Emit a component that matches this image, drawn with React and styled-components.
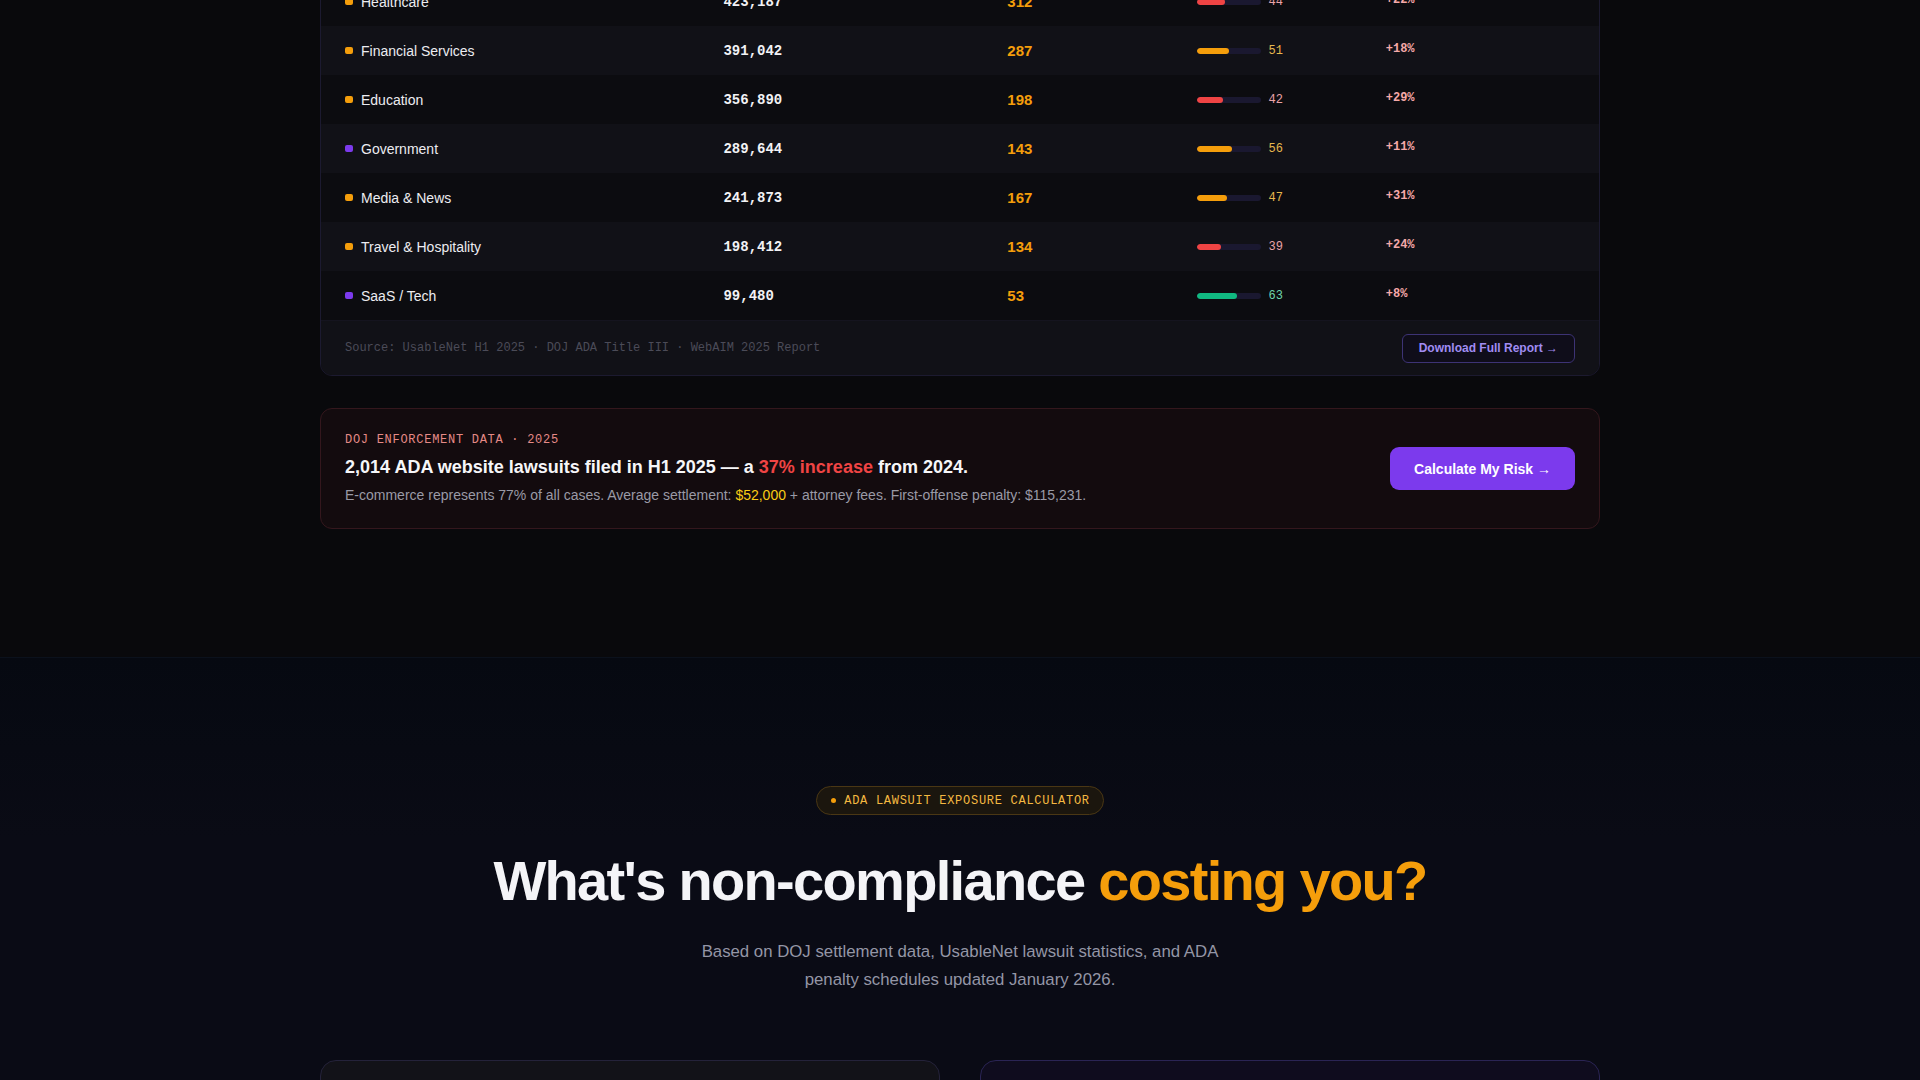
import React from 'react';
import styled, { createGlobalStyle } from 'styled-components';

const GlobalStyle = createGlobalStyle`
  html, body {
    margin: 0;
    padding: 0;
    background: #09090c;
  }
  body {
    font-family: "Liberation Sans", Arial, sans-serif;
    color: #e8e8ee;
    overflow: hidden;
  }
  * {
    box-sizing: border-box;
  }
`;

const SANS = '"Liberation Sans", Arial, sans-serif';
const MONO = '"Liberation Mono", "DejaVu Sans Mono", monospace';

const rows = [
  { name: 'Healthcare', dot: 'amber', sites: '423,187', suits: 312, score: 44, tone: 'red', change: '+22%' },
  { name: 'Financial Services', dot: 'amber', sites: '391,042', suits: 287, score: 51, tone: 'amber', change: '+18%' },
  { name: 'Education', dot: 'amber', sites: '356,890', suits: 198, score: 42, tone: 'red', change: '+29%' },
  { name: 'Government', dot: 'purple', sites: '289,644', suits: 143, score: 56, tone: 'amber', change: '+11%' },
  { name: 'Media & News', dot: 'amber', sites: '241,873', suits: 167, score: 47, tone: 'amber', change: '+31%' },
  { name: 'Travel & Hospitality', dot: 'amber', sites: '198,412', suits: 134, score: 39, tone: 'red', change: '+24%' },
  { name: 'SaaS / Tech', dot: 'purple', sites: '99,480', suits: 53, score: 63, tone: 'green', change: '+8%' },
];

const dotColors = { amber: '#f59e0b', purple: '#7c3aed' };
const barColors = { red: '#ef4444', amber: '#f59e0b', green: '#10b981' };
const scoreColors = { red: '#e9a3a8', amber: '#e6b84e', green: '#6fd6ad' };

// the page is shown scrolled: the Healthcare row sits half above the fold
const Page = styled.main`
  margin-top: -24px;
`;

const DataSection = styled.section`
  padding: 0 0 128px;
  background: #09090c;
`;

const Container = styled.div`
  width: 1280px;
  margin: 0 auto;
`;

const TableCard = styled.div`
  background: #0d0d12;
  border: 1px solid #1c1a30;
  border-radius: 12px;
  overflow: hidden;
`;

const Row = styled.div`
  display: grid;
  grid-template-columns: 2fr 1.5fr 1fr 1fr 1fr;
  align-items: center;
  height: 49px;
  padding: 0 24px;
  background: ${({ $alt }) => ($alt ? '#111117' : '#0c0c10')};
`;

const NameCell = styled.div`
  display: flex;
  align-items: center;
  gap: 8px;
  font-family: ${SANS};
  font-size: 14px;
  color: #ececf1;
`;

const Dot = styled.span`
  width: 8px;
  height: 7px;
  border-radius: 2px;
  background: ${({ $color }) => dotColors[$color]};
`;

const Sites = styled.div`
  font-family: ${MONO};
  font-size: 14px;
  font-weight: 700;
  color: #f2f2f5;
`;

const Suits = styled.div`
  font-family: ${SANS};
  font-size: 15px;
  font-weight: 700;
  color: #f59e0b;
`;

const ScoreCell = styled.div`
  display: flex;
  align-items: center;
  gap: 8px;
`;

const Track = styled.div`
  width: 64px;
  height: 6px;
  border-radius: 3px;
  background: #1a1830;
  overflow: hidden;
`;

const Fill = styled.div`
  height: 100%;
  border-radius: 3px;
  background: ${({ $tone }) => barColors[$tone]};
`;

const ScoreText = styled.span`
  font-family: ${MONO};
  font-size: 12px;
  color: ${({ $tone }) => scoreColors[$tone]};
`;

const Change = styled.div`
  font-family: ${MONO};
  font-size: 12px;
  font-weight: 700;
  color: #f5a9a9;
  padding-bottom: 4px;
`;

const TableFooter = styled.div`
  display: flex;
  align-items: center;
  justify-content: space-between;
  height: 55px;
  padding: 0 24px;
  background: #111117;
  border-top: 1px solid #15141f;
`;

const Source = styled.span`
  font-family: ${MONO};
  font-size: 12px;
  color: #4b4b58;
`;

const OutlineButton = styled.button`
  font-family: ${SANS};
  font-size: 12px;
  font-weight: 700;
  color: #a08cf2;
  background: #0f0d1a;
  border: 1px solid #3d3375;
  border-radius: 6px;
  padding: 0 16px;
  height: 29px;
  cursor: pointer;
`;

const AlertCard = styled.div`
  display: flex;
  align-items: center;
  justify-content: space-between;
  margin-top: 32px;
  padding: 23px 24px;
  background: #130b0e;
  border: 1px solid #34171d;
  border-radius: 12px;
`;

const AlertLabel = styled.div`
  font-family: ${MONO};
  font-size: 12px;
  line-height: 16px;
  letter-spacing: 0.06em;
  color: #e58a87;
`;

const AlertTitle = styled.h3`
  margin: 8px 0 0;
  font-family: ${SANS};
  font-size: 18px;
  line-height: 22px;
  font-weight: 700;
  color: #f6f6f8;
`;

const Red = styled.span`
  color: #ef4444;
`;

const AlertText = styled.p`
  margin: 7px 0 0;
  font-family: ${SANS};
  font-size: 14px;
  line-height: 20px;
  color: #9a9aa6;
`;

const Gold = styled.span`
  color: #facc15;
`;

const PrimaryButton = styled.button`
  font-family: ${SANS};
  font-size: 14px;
  font-weight: 700;
  color: #ffffff;
  background: #7c3aed;
  border: none;
  border-radius: 9px;
  height: 43px;
  padding: 0 24px;
  cursor: pointer;
`;

const CalcSection = styled.section`
  padding: 128px 0 0;
  border-top: 1px solid #0b111c;
  background: linear-gradient(180deg, #060911 0%, #0a0b15 22%, #0a0b15 100%);
  display: flex;
  flex-direction: column;
  align-items: center;
`;

const Badge = styled.div`
  display: inline-flex;
  align-items: center;
  gap: 8px;
  height: 29px;
  padding: 0 13px 0 14px;
  border-radius: 999px;
  background: #1b160e;
  border: 1px solid #4a3714;
  font-family: ${MONO};
  font-size: 12px;
  letter-spacing: 0.06em;
  color: #f5b941;
`;

const BadgeDot = styled.span`
  width: 5px;
  height: 5px;
  border-radius: 50%;
  background: #f59e0b;
`;

const Headline = styled.h2`
  margin: 35px 0 0;
  font-family: ${SANS};
  font-size: 56px;
  line-height: 1.1;
  font-weight: 700;
  letter-spacing: -0.03em;
  color: #f4f4f7;
  text-align: center;
`;

const Accent = styled.span`
  color: #f59e0b;
`;

const Lead = styled.p`
  margin: 26px 0 0;
  max-width: 540px;
  font-family: ${SANS};
  font-size: 16.8px;
  line-height: 28px;
  color: #9496a6;
  text-align: center;
`;

const CardGrid = styled.div`
  display: grid;
  grid-template-columns: 1fr 1fr;
  gap: 40px;
  width: 1280px;
  margin-top: 66px;
`;

const Panel = styled.div`
  height: 420px;
  border-radius: 16px;
  background: ${({ $dark }) => ($dark ? '#0f0c1e' : '#121218')};
  border: 1px solid ${({ $dark }) => ($dark ? '#2a2454' : '#24223a')};
`;

const App = () => (
  <>
    <GlobalStyle />
    <Page>
      <DataSection>
        <Container>
          <TableCard>
            {rows.map((r, i) => (
              <Row key={r.name} $alt={i % 2 === 1}>
                <NameCell>
                  <Dot $color={r.dot} />
                  {r.name}
                </NameCell>
                <Sites>{r.sites}</Sites>
                <Suits>{r.suits}</Suits>
                <ScoreCell>
                  <Track>
                    <Fill $tone={r.tone} style={{ width: `${r.score}%` }} />
                  </Track>
                  <ScoreText $tone={r.tone}>{r.score}</ScoreText>
                </ScoreCell>
                <Change>{r.change}</Change>
              </Row>
            ))}
            <TableFooter>
              <Source>Source: UsableNet H1 2025 · DOJ ADA Title III · WebAIM 2025 Report</Source>
              <OutlineButton>Download Full Report →</OutlineButton>
            </TableFooter>
          </TableCard>

          <AlertCard>
            <div>
              <AlertLabel>DOJ ENFORCEMENT DATA · 2025</AlertLabel>
              <AlertTitle>
                2,014 ADA website lawsuits filed in H1 2025 — a <Red>37% increase</Red> from 2024.
              </AlertTitle>
              <AlertText>
                E-commerce represents 77% of all cases. Average settlement: <Gold>$52,000</Gold> +
                attorney fees. First-offense penalty: $115,231.
              </AlertText>
            </div>
            <PrimaryButton>Calculate My Risk →</PrimaryButton>
          </AlertCard>
        </Container>
      </DataSection>

      <CalcSection>
        <Badge>
          <BadgeDot />
          ADA LAWSUIT EXPOSURE CALCULATOR
        </Badge>
        <Headline>
          What's non-compliance <Accent>costing you?</Accent>
        </Headline>
        <Lead>
          Based on DOJ settlement data, UsableNet lawsuit statistics, and ADA penalty schedules
          updated January 2026.
        </Lead>
        <CardGrid>
          <Panel />
          <Panel $dark />
        </CardGrid>
      </CalcSection>
    </Page>
  </>
);

export default App;
